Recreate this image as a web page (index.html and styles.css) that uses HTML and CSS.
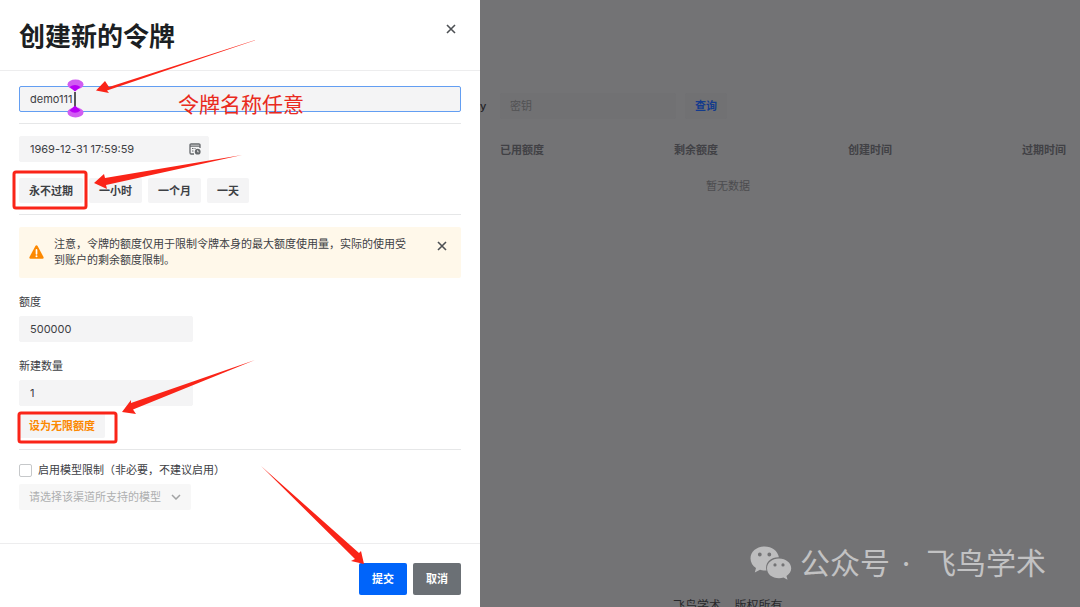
FILE: index.html
```html
<!DOCTYPE html>
<html lang="zh-CN">
<head>
<meta charset="utf-8">
<title>创建新的令牌</title>
<link rel="stylesheet" href="styles.css">
</head>
<body>
<div class="page">
  <form class="sheet">
    <header class="sheet-header">
      <h1 class="title">创建新的令牌</h1>
      <button type="button" class="close" aria-label="关闭">
        <svg width="10" height="10" viewBox="0 0 10 10"><path d="M1 1l8 8M9 1L1 9" /></svg>
      </button>
    </header>

    <div class="sheet-body">
      <input class="field field-focus" type="text" aria-label="名称" value="demo111">
      <hr class="rule">
      <div class="date">
        <input class="field" type="text" aria-label="过期时间" value="1969-12-31 17:59:59">
        <svg class="date-icon" width="12" height="12" viewBox="0 0 12 12">
          <path d="M11 5V2.2Q11 1 9.800 1H2.200Q1 1 1 2.200V9.800Q1 11 2.200 11H5M1 3.200H11" fill="none" stroke="#66696c" stroke-width="1.300"/>
          <path d="M3 5.500h1.500M5.500 5.500h1M3 8h1.500" stroke="#66696c" stroke-width="1.200"/>
          <circle cx="8.700" cy="8.700" r="2.900" fill="#66696c"/>
          <path d="M8.600 7.200v1.700h1.300" fill="none" stroke="#f4f4f4" stroke-width=".8"/>
        </svg>
      </div>
      <div class="presets">
        <button type="button" class="btn">永不过期</button>
        <button type="button" class="btn">一小时</button>
        <button type="button" class="btn">一个月</button>
        <button type="button" class="btn">一天</button>
      </div>
      <hr class="rule">
      <div class="alert">
        <svg class="alert-icon" width="15" height="14" viewBox="0 0 15 14">
          <path d="M7.500 .3Q8.200 .3 8.600 1L14.500 12Q15.100 13.600 13.500 13.700H1.500Q-.1 13.600 .5 12L6.400 1Q6.800 .3 7.500 .3Z" fill="#fc8800"/>
          <path d="M7.500 4.800V8.800" stroke="#fff" stroke-width="1.700" stroke-linecap="round"/>
          <circle cx="7.500" cy="11.200" r="1" fill="#fff"/>
        </svg>
        <p class="alert-text">注意，令牌的额度仅用于限制令牌本身的最大额度使用量，实际的使用受到账户的剩余额度限制。</p>
        <button type="button" class="close" aria-label="关闭提示">
          <svg width="10" height="10" viewBox="0 0 10 10"><path d="M1 1l8 8M9 1L1 9" /></svg>
        </button>
      </div>
      <div class="group">
        <label for="quota">额度</label>
        <input class="field field-short" id="quota" type="text" value="500000">
      </div>
      <div class="group">
        <label for="count">新建数量</label>
        <input class="field field-short" id="count" type="text" value="1">
      </div>
      <button type="button" class="btn btn-warning">设为无限额度</button>
      <hr class="rule">
      <div class="check">
        <input type="checkbox" id="limit">
        <label for="limit">启用模型限制（非必要，不建议启用）</label>
      </div>
      <div class="select">
        <select aria-label="模型" disabled><option>请选择该渠道所支持的模型</option></select>
        <svg class="chevron" width="10" height="6" viewBox="0 0 10 6"><path d="M1 1l4 4 4-4" fill="none" stroke="#a2a3a4" stroke-width="1.500"/></svg>
      </div>
    </div>

    <footer class="sheet-footer">
      <button type="submit" class="action primary">提交</button>
      <button type="button" class="action secondary">取消</button>
    </footer>

    <svg class="marks" width="480" height="607" viewBox="0 0 480 607">
      <g fill="#fa2418">
        <path d="M263 37.500L109 87L105 81L96 90.500L109 93L107 90.500Z"/>
        <path d="M242 155L105 178L104 174L94 183L107 189L106 185Z"/>
        <path d="M255 360L131 403L131 400L122 412L136 414L133 409.500Z"/>
        <path d="M261 466L359 553L361 551L364 564L351 561L355 559Z"/>
      </g>
      <g fill="none" stroke="#fa2418" stroke-width="3">
        <rect x="14" y="172" width="72" height="36" rx="2"/>
        <rect x="19" y="413" width="97" height="29" rx="2"/>
      </g>
      <path d="M75 92V107" stroke="#222" stroke-width="1.500"/>
      <g fill="#d15cf2">
        <ellipse cx="75.500" cy="84.500" rx="8" ry="5"/>
        <ellipse cx="75.500" cy="112.500" rx="8" ry="5"/>
      </g>
      <path d="M69.500 87Q75 83 80.500 87L75 91.500ZM69.500 110.500Q75 115 80.500 110.500L75 105.500Z" fill="#b800f5"/>
    </svg>
    <span class="note">令牌名称任意</span>
  </form>

  <main class="backdrop">
    <div class="search">
      <label for="key">y</label>
      <input class="key-field" id="key" type="text" placeholder="密钥">
      <button type="button" class="query">查询</button>
    </div>
    <table class="tokens">
      <thead><tr><th>已用额度</th><th>剩余额度</th><th>创建时间</th><th>过期时间</th></tr></thead>
      <tbody><tr><td colspan="4">暂无数据</td></tr></tbody>
    </table>
    <p class="copyright">飞鸟学术&nbsp;&nbsp;&nbsp;&nbsp;版权所有</p>
    <div class="watermark">
      <svg width="42" height="34" viewBox="0 0 42 34">
        <path fill="#bdbdbe" fill-rule="evenodd" d="M14.500 .5C6.500 .5 .5 5.700 .5 12.500C.5 16.500 2.700 19.800 6 22L4.800 26.500L10 23.800Q13 24.700 16.500 24.500C14.500 17 20.500 11 28.900 11.300C27.800 5 22 .5 14.500 .5ZM9.800 6.600a1.900 1.900 0 1 1 0 3.800a1.900 1.900 0 1 1 0-3.800ZM19.300 6.600a1.900 1.900 0 1 1 0 3.800a1.900 1.900 0 1 1 0-3.800Z"/>
        <path fill="#bdbdbe" fill-rule="evenodd" d="M29 12.500C22 12.500 17 17 17 22.300C17 28 22 32.300 29 32.300Q31.500 32.300 33.500 31.500L37.500 33.700L36.500 30C39.500 28 41.200 25.400 41.200 22.300C41.200 17 36 12.500 29 12.500ZM25 17.300a1.600 1.600 0 1 1 0 3.200a1.600 1.600 0 1 1 0-3.200ZM33 17.300a1.600 1.600 0 1 1 0 3.200a1.600 1.600 0 1 1 0-3.200Z"/>
      </svg>
      <span>公众号</span><span class="dot">·</span><span>飞鸟学术</span>
    </div>
  </main>
</div>
</body>
</html>
```

FILE: styles.css
```css
* { box-sizing: border-box; }

body {
  margin: 0;
  font: 11px/16px Inter, "Noto Sans CJK SC", sans-serif;
  color: #3d4044;
}

input, button, select { font: inherit; color: inherit; }
button { border: 0; padding: 0; cursor: pointer; }
p, h1 { margin: 0; }

.page {
  display: grid;
  grid-template-columns: 4fr 5fr;
  height: 100vh;
  overflow: hidden;
}

.sheet {
  position: relative;
  display: flex;
  flex-direction: column;
  background: #fff;
  min-width: 0;
}

.sheet-header {
  display: flex;
  justify-content: space-between;
  align-items: flex-start;
  padding: 20px 24px 16px 19px;
  border-bottom: 1px solid #ededee;
}

.title {
  font-size: 26px;
  line-height: 34px;
  font-weight: 700;
  color: #1c1f23;
}

.close {
  display: flex;
  background: none;
  padding: 4px 0;
}
.close path { fill: none; stroke: #4d5054; stroke-width: 1.6; }

.sheet-body {
  flex: 1;
  display: flex;
  flex-direction: column;
  align-items: flex-start;
  padding: 15px 19px 0;
}

.field {
  width: 100%;
  height: 26px;
  padding: 0 10px;
  border: 1px solid #f4f4f5;
  border-radius: 2px;
  background: #f4f4f5;
  outline: 0;
}
.field-focus { border-color: #639ef2; }
.field-short { width: 174px; }

.rule {
  width: 100%;
  margin: 11px 0 12px;
  border: 0;
  border-top: 1px solid #e6e7e8;
}

.date { position: relative; width: 190px; }
.date-icon { position: absolute; right: 8px; top: 7px; }

.presets { display: flex; gap: 6px; margin-top: 16px; }

.btn {
  height: 25px;
  padding: 0 10px;
  border-radius: 2px;
  background: #f4f4f5;
  font-weight: 700;
}
.btn-warning { margin-top: 7px; color: #fc8800; }

.alert {
  display: flex;
  width: 100%;
  padding: 9px 14px 10px 10px;
  background: #fff8ea;
  border-radius: 2px;
}
.alert-icon { flex: none; margin: 9px 10px 0 0; }
.alert-text { flex: 1; padding-right: 24px; }
.alert .close { align-self: flex-start; padding: 5px 0; }

.group { display: flex; flex-direction: column; gap: 6px; margin-top: 16px; }

.check { display: flex; align-items: center; gap: 6px; }
.check input {
  appearance: none;
  width: 13px;
  height: 13px;
  margin: 0;
  border: 1px solid #c6c8ca;
  border-radius: 2px;
}

.select { position: relative; margin-top: 6px; }
.select select {
  appearance: none;
  width: 172px;
  height: 26px;
  padding: 0 10px;
  border: 0;
  border-radius: 2px;
  background: #f7f7f7;
  color: #aeafb0;
  opacity: 1;
}
.chevron { position: absolute; right: 10px; top: 10px; }

.sheet-footer {
  display: flex;
  justify-content: flex-end;
  gap: 6px;
  padding: 19px 19px 12px;
  border-top: 1px solid #ededee;
}
.action {
  width: 48px;
  height: 32px;
  border-radius: 2px;
  color: #fff;
  font-weight: 700;
}
.primary { background: #0064fa; }
.secondary { background: #6b7075; }

.marks { position: absolute; left: 0; top: 0; pointer-events: none; }
.note {
  position: absolute;
  left: 178px;
  top: 90px;
  font-size: 21px;
  line-height: 30px;
  color: #e92a20;
}

.backdrop {
  position: relative;
  display: flex;
  flex-direction: column;
  min-width: 0;
  overflow: hidden;
  background: #737375;
  color: #48484b;
}

.search { display: flex; align-items: center; padding-top: 93px; }
.search label { width: 20px; color: #222226; font-weight: 500; }
.key-field {
  width: 176px;
  height: 26px;
  padding: 0 10px;
  border: 0;
  border-radius: 2px;
  background: #717173;
}
.key-field::placeholder { color: #515154; }
.query {
  height: 26px;
  margin-left: 9px;
  padding: 0 10px;
  border-radius: 2px;
  background: #717173;
  color: #143b8c;
  font-weight: 700;
}

.tokens {
  width: 116%;
  margin: 23px 0 0 20px;
  table-layout: fixed;
  border-collapse: collapse;
}
.tokens th { padding: 0 0 10px; text-align: left; color: #414145; }
.tokens td { padding: 10px 0 0 206px; color: #4c4c4f; }

.copyright {
  margin: auto 0 -7px 193px;
  font-size: 12px;
  color: #28282b;
}

.watermark {
  position: absolute;
  right: 34px;
  bottom: 22px;
  display: flex;
  align-items: center;
  font-size: 30px;
  line-height: 44px;
  color: #c2c2c3;
}
.watermark svg { margin-right: 8px; }
.watermark .dot { width: 36px; padding-right: 4px; text-align: center; }
```
